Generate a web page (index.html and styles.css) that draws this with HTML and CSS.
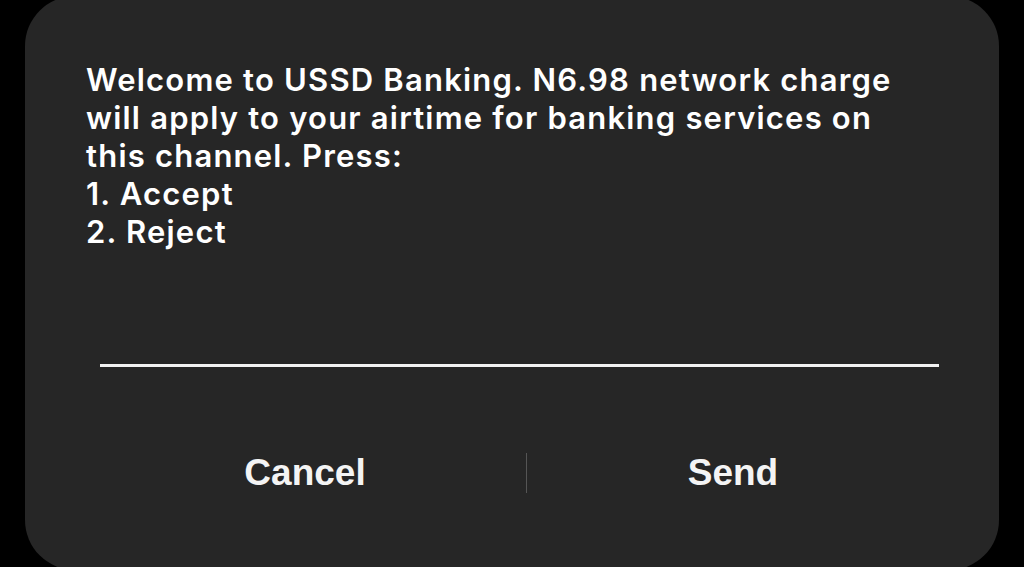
FILE: index.html
```html
<!DOCTYPE html>
<html lang="en">
<head>
  <meta charset="utf-8" />
  <title>USSD</title>
  <link rel="stylesheet" href="styles.css">
</head>
<body>
  <div class="dialog">
    <p class="message">Welcome to USSD Banking. N6.98 network charge<br>
      will apply to your airtime for banking services on<br>
      this channel. Press:<br>
      1. Accept<br>
      2. Reject</p>
    <div class="reply"></div>
    <div class="actions">
      <button class="action cancel">Cancel</button>
      <span class="divider"></span>
      <button class="action">Send</button>
    </div>
  </div>
</body>
</html>
```

FILE: styles.css
```css
body {
  margin: 0;
  background: #000;
  overflow: hidden;
}

.dialog {
  margin: -4px 25px 0 25px;
  height: 574px;
  background: #262626;
  border-radius: 50px;
  box-sizing: border-box;
  padding-top: 65px;
}

.message {
  margin: 0 0 0 61px;
  color: #fff;
  font-family: Inter, "Open Sans", sans-serif;
  font-weight: 600;
  font-size: 31px;
  letter-spacing: 1.2px;
  line-height: 38px;
}

.reply {
  margin: 113px 60px 0 75px;
  height: 3px;
  background: #f2f2f2;
}

.actions {
  display: grid;
  grid-template-columns: 426px 1px 1fr;
  align-items: center;
  margin: 86px 60px 0 75px;
}

.divider {
  height: 40px;
  background: #555;
}

.action {
  background: none;
  border: none;
  padding: 0;
  color: #f4f4f4;
  font-family: "Liberation Sans", Arial, sans-serif;
  font-weight: bold;
  font-size: 37px;
  line-height: 40px;
  text-align: center;
}

.cancel {
  padding-right: 16px;
}
```
